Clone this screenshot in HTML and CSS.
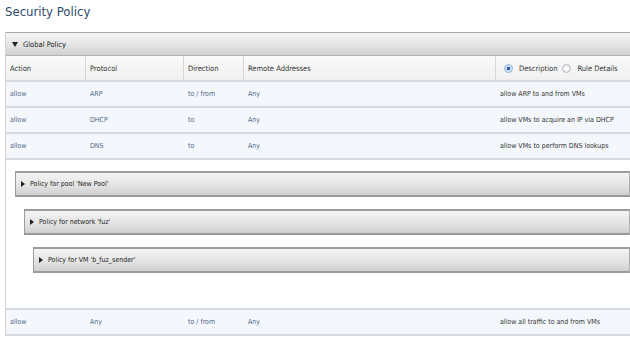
FILE: index.html
```html
<!DOCTYPE html>
<html>
<head>
  <meta charset="UTF-8">
  <title>Security Policy</title>
  <link rel="stylesheet" href="styles.css">
</head>
<body>

<h1 class="title">Security Policy</h1>

<div class="policy">
  <div class="bar bar-global"><span class="arrow-down"></span>Global Policy</div>

  <div class="row head">
    <div class="cell c-action">Action</div>
    <div class="cell c-proto">Protocol</div>
    <div class="cell c-dir">Direction</div>
    <div class="cell c-remote">Remote Addresses</div>
    <div class="cell c-desc">
      <span class="radio on"></span>Description
      <span class="radio"></span>Rule Details
    </div>
  </div>

  <div class="row">
    <div class="cell c-action">allow</div>
    <div class="cell c-proto">ARP</div>
    <div class="cell c-dir">to / from</div>
    <div class="cell c-remote">Any</div>
    <div class="cell c-desc">allow ARP to and from VMs</div>
  </div>
  <div class="row">
    <div class="cell c-action">allow</div>
    <div class="cell c-proto">DHCP</div>
    <div class="cell c-dir">to</div>
    <div class="cell c-remote">Any</div>
    <div class="cell c-desc">allow VMs to acquire an IP via DHCP</div>
  </div>
  <div class="row">
    <div class="cell c-action">allow</div>
    <div class="cell c-proto">DNS</div>
    <div class="cell c-dir">to</div>
    <div class="cell c-remote">Any</div>
    <div class="cell c-desc">allow VMs to perform DNS lookups</div>
  </div>

  <div class="nested">
    <div class="bar sub"><span class="arrow-right"></span>Policy for pool 'New Pool'</div>
    <div class="nested">
      <div class="bar sub"><span class="arrow-right"></span>Policy for network 'fuz'</div>
      <div class="nested">
        <div class="bar sub"><span class="arrow-right"></span>Policy for VM 'b_fuz_sender'</div>
      </div>
    </div>
  </div>

  <div class="row last">
    <div class="cell c-action">allow</div>
    <div class="cell c-proto">Any</div>
    <div class="cell c-dir">to / from</div>
    <div class="cell c-remote">Any</div>
    <div class="cell c-desc">allow all traffic to and from VMs</div>
  </div>
</div>

</body>
</html>
```

FILE: styles.css
```css
body {
  margin: 0;
  background: #fff;
  font-family: "DejaVu Sans", sans-serif;
  font-stretch: condensed;
  font-size: 7px;
  color: #333;
}
.title {
  margin: 0;
  padding: 4px 0 0 5px;
  height: 32px;
  box-sizing: border-box;
  font-size: 13px;
  font-weight: normal;
  color: #2f4b6c;
}
.policy {
  margin-left: 5px;
  border-left: 1px solid #d4d4d4;
}
.bar {
  display: flex;
  align-items: center;
  background: linear-gradient(#f4f4f4, #e4e4e4 55%, #d0d0d0);
  color: #222;
}
.bar-global {
  height: 22px;
  padding-left: 6px;
  border-top: 1px solid #a8a8a8;
  border-bottom: 1px solid #b4b4b4;
  font-size: 7.5px;
}
.arrow-down {
  width: 0;
  height: 0;
  border-left: 3px solid transparent;
  border-right: 3px solid transparent;
  border-top: 5px solid #222;
  margin-right: 5px;
}
.arrow-right {
  width: 0;
  height: 0;
  border-top: 3px solid transparent;
  border-bottom: 3px solid transparent;
  border-left: 4px solid #222;
  margin-right: 5px;
}
.row {
  display: flex;
  height: 24px;
  align-items: center;
  background: #f4f7fb;
  border-bottom: 2px solid #d6d9dd;
  color: #50698a;
}
.row.head {
  background: linear-gradient(#fafafa, #f0f0f0);
  color: #333;
  font-size: 7.5px;
  align-items: stretch;
}
.row.head .cell {
  display: flex;
  align-items: center;
  border-right: 1px solid #d6d6d6;
}
.row.head .cell.c-desc {
  border-right: none;
}
.cell {
  padding-left: 4px;
  box-sizing: border-box;
}
.c-action { width: 80px; }
.c-proto { width: 98px; }
.c-dir { width: 60px; }
.c-remote { width: 252px; }
.c-desc { flex: 1; color: #333; }
.row.head .c-desc {
  padding-left: 8px;
}
.radio {
  display: inline-block;
  width: 9px;
  height: 9px;
  border-radius: 50%;
  box-sizing: border-box;
  border: 1px solid #b8bcc2;
  background: radial-gradient(#ffffff, #dfe2e6);
  margin-right: 6px;
}
.radio.on {
  background: radial-gradient(#2f5fa8 0, #2f5fa8 1.5px, #bfd6ee 2px, #eaf2fb 4px);
  border-color: #8fb0d6;
}
.c-desc .radio:not(.on) {
  margin-left: 5px;
}
.nested {
  padding: 12px 0 0 9px;
}
.policy > .nested {
  padding-top: 11px;
  padding-bottom: 35px;
}
.bar.sub {
  height: 22px;
  padding-left: 5px;
  border-top: 2px solid #9c9c9c;
  border-left: 1px solid #9c9c9c;
  border-right: 1px solid #b0b0b0;
  border-bottom: 2px solid #9a9a9a;
}
.row.last {
  border-top: 2px solid #d6d9dd;
}
```
